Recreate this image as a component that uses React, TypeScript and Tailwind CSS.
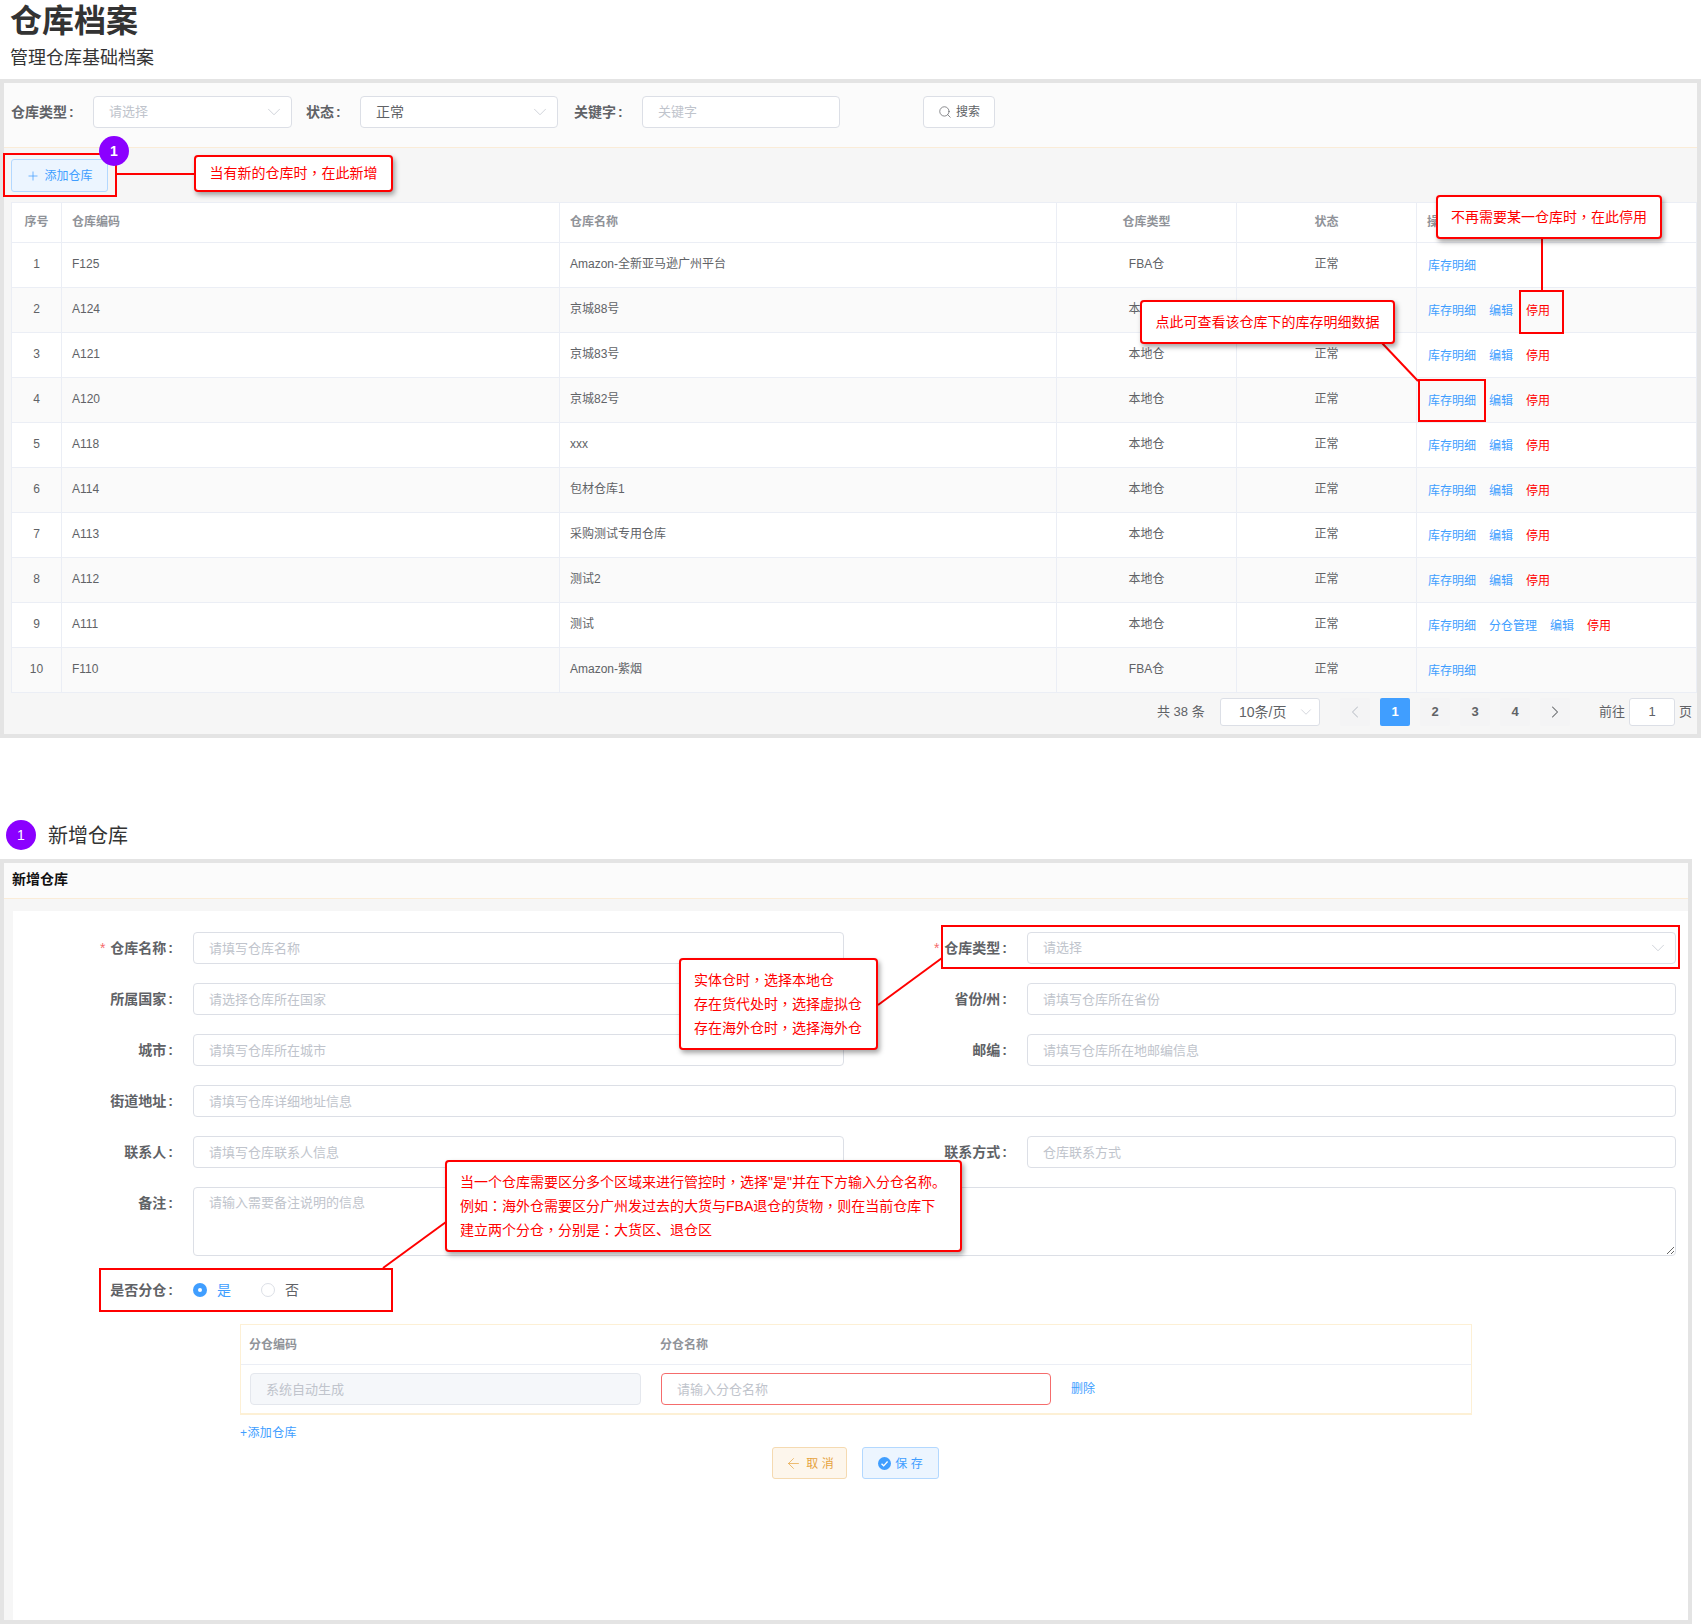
import React from 'react';
import { ChevronDown, ChevronLeft, ChevronRight, Plus, Search, ArrowLeft } from 'lucide-react';

type Row = { id: number; code: string; name: string; type: string; mode: 'view' | 'normal' | 'split' };

const rows: Row[] = [
  { id: 1, code: 'F125', name: 'Amazon-全新亚马逊广州平台', type: 'FBA仓', mode: 'view' },
  { id: 2, code: 'A124', name: '京城88号', type: '本地仓', mode: 'normal' },
  { id: 3, code: 'A121', name: '京城83号', type: '本地仓', mode: 'normal' },
  { id: 4, code: 'A120', name: '京城82号', type: '本地仓', mode: 'normal' },
  { id: 5, code: 'A118', name: 'xxx', type: '本地仓', mode: 'normal' },
  { id: 6, code: 'A114', name: '包材仓库1', type: '本地仓', mode: 'normal' },
  { id: 7, code: 'A113', name: '采购测试专用仓库', type: '本地仓', mode: 'normal' },
  { id: 8, code: 'A112', name: '测试2', type: '本地仓', mode: 'normal' },
  { id: 9, code: 'A111', name: '测试', type: '本地仓', mode: 'split' },
  { id: 10, code: 'F110', name: 'Amazon-紫烟', type: 'FBA仓', mode: 'view' },
];

const inputClass =
  'h-8 rounded-[4px] border px-[15px] text-[13px] text-[#606266] outline-none placeholder:text-[#c0c4cc]';

// the callouts centre their full-width punctuation, which the TC font does
function zh(text: string) {
  return text.split(/([，：])/).map((part, i) =>
    part === '，' || part === '：' ? (
      <span key={i} className="font-['Liberation_Sans','Noto_Sans_CJK_TC',sans-serif]">
        {part}
      </span>
    ) : (
      part
    ),
  );
}

function SelectBox({ value, placeholder, className }: { value?: string; placeholder?: string; className: string }) {
  return (
    <div className={`flex h-8 items-center justify-between rounded-[4px] border border-[#dcdfe6] bg-white pl-[15px] pr-[6px] text-[13px] ${className}`}>
      <span className={value ? 'text-[14px] text-[#606266]' : 'text-[#c0c4cc]'}>{value || placeholder}</span>
      <ChevronDown size={22} strokeWidth={0.8} className="text-[#c0c4cc]" />
    </div>
  );
}

function Colon() {
  return <span className="ml-[2px]">:</span>;
}

function FormLabel({ text, required, width }: { text: string; required?: boolean; width: string }) {
  return (
    <label className={`shrink-0 text-right text-[14px] font-bold text-[#606266] ${width}`}>
      {required && <span className="mr-[5px] font-normal text-[#f56c6c]">*</span>}
      {text}
      <Colon />
    </label>
  );
}

function Field({ label, placeholder, required }: { label: string; placeholder: string; required?: boolean }) {
  return (
    <div className="flex items-center">
      <FormLabel text={label} required={required} width="w-[160px]" />
      <input className={`${inputClass} ml-5 w-[651px] border-[#dcdfe6] bg-white`} placeholder={placeholder} />
    </div>
  );
}

function RightField({ label, placeholder }: { label: string; placeholder: string }) {
  return (
    <div className="flex items-center">
      <FormLabel text={label} width="w-[163px]" />
      <input className={`${inputClass} ml-5 w-[649px] border-[#dcdfe6] bg-white`} placeholder={placeholder} />
    </div>
  );
}

function Actions({ mode }: { mode: Row['mode'] }) {
  return (
    <div className="relative top-[2px] flex gap-[13px] text-[12px] text-[#409eff]">
      <span>库存明细</span>
      {mode === 'split' && <span>分仓管理</span>}
      {mode !== 'view' && <span>编辑</span>}
      {mode !== 'view' && <span className="text-[#ff0000]">停用</span>}
    </div>
  );
}

function StepBadge({ className }: { className?: string }) {
  return (
    <div className={`flex h-[30px] w-[30px] items-center justify-center rounded-full bg-[#8b00ff] text-[14px] text-white ${className || ''}`}>
      1
    </div>
  );
}

function Callout({ className, children }: { className: string; children: React.ReactNode }) {
  return (
    <div className={`absolute rounded-[4px] border-2 border-[#ff0000] bg-white text-[14px] text-[#ff0000] shadow-[2px_3px_5px_rgba(0,0,0,0.35)] ${className}`}>
      {children}
    </div>
  );
}

function Mark({ className }: { className: string }) {
  return <div className={`absolute border-2 border-[#ff0000] ${className}`} />;
}

function PageButton({ children, active }: { children: React.ReactNode; active?: boolean }) {
  return (
    <div className={`flex h-7 w-[30px] items-center justify-center rounded-[2px] text-[13px] font-bold ${active ? 'bg-[#409eff] text-white' : 'bg-[#f4f4f5] text-[#606266]'}`}>
      {children}
    </div>
  );
}

export default function App() {
  return (
    <div className="relative h-[1624px] w-[1701px] overflow-hidden bg-white font-['Liberation_Sans','Noto_Sans_CJK_SC',sans-serif]">
      {/* page title */}
      <div className="h-[79px] pl-[10px] pt-[1px]">
        <h1 className="text-[32px] font-bold leading-[40px] text-[#333333]">仓库档案</h1>
        <p className="mt-[3px] text-[18px] leading-[28px] text-[#333333]">管理仓库基础档案</p>
      </div>

      {/* list panel */}
      <div className="border-4 border-[#e4e4e4] bg-[#f6f6f6]">
        <div className="flex h-[65px] items-start border-b border-[#faecd8] bg-[#fbfbfb] pt-[13px] text-[14px] font-bold leading-8 text-[#606266]">
          <span className="ml-[7px] w-[82px]">
            仓库类型
            <Colon />
          </span>
          <SelectBox placeholder="请选择" className="w-[199px] font-normal" />
          <span className="ml-[14px] w-[54px]">
            状态
            <Colon />
          </span>
          <SelectBox value="正常" className="w-[198px] font-normal" />
          <span className="ml-[16px] w-[68px]">
            关键字
            <Colon />
          </span>
          <input className={`${inputClass} w-[198px] border-[#dcdfe6] bg-white font-normal`} placeholder="关键字" />
          <button className="ml-[83px] flex h-8 w-[72px] items-center justify-center gap-1 rounded-[4px] border border-[#dcdfe6] bg-white text-[12px] font-normal text-[#606266]">
            <Search size={14} strokeWidth={1.25} />
            搜索
          </button>
        </div>

        <div className="flex h-[54px] items-start pl-[7px] pt-[11px]">
          <button className="flex h-[33px] w-[97px] items-center justify-center gap-1 rounded-[3px] border border-[#b3d8ff] bg-[#ecf5ff] text-[12px] text-[#409eff]">
            <Plus size={14} strokeWidth={1.25} />
            添加仓库
          </button>
        </div>

        <div className="ml-[7px]">
          <table className="w-full table-fixed border-collapse bg-white text-[12px] text-[#606266]">
            <colgroup>
              <col className="w-[50px]" />
              <col className="w-[498px]" />
              <col className="w-[497px]" />
              <col className="w-[180px]" />
              <col className="w-[180px]" />
              <col />
            </colgroup>
            <thead>
              <tr className="h-10 text-left font-bold text-[#909399]">
                <th className="border border-[#ebeef5] pb-[2px] text-center">序号</th>
                <th className="border border-[#ebeef5] pb-[2px] pl-[10px]">仓库编码</th>
                <th className="border border-[#ebeef5] pb-[2px] pl-[10px]">仓库名称</th>
                <th className="border border-[#ebeef5] pb-[2px] text-center">仓库类型</th>
                <th className="border border-[#ebeef5] pb-[2px] text-center">状态</th>
                <th className="border border-[#ebeef5] pb-[2px] pl-[10px]">操作</th>
              </tr>
            </thead>
            <tbody>
              {rows.map((row) => (
                <tr key={row.id} className={`h-[45px] ${row.id % 2 === 0 ? 'bg-[#fafafa]' : 'bg-white'}`}>
                  <td className="border border-[#ebeef5] pb-[2px] text-center">{row.id}</td>
                  <td className="border border-[#ebeef5] pb-[2px] pl-[10px]">{row.code}</td>
                  <td className="border border-[#ebeef5] pb-[2px] pl-[10px]">{row.name}</td>
                  <td className="border border-[#ebeef5] pb-[2px] text-center">{row.type}</td>
                  <td className="border border-[#ebeef5] pb-[2px] text-center">正常</td>
                  <td className="border border-[#ebeef5] pb-[2px] pl-[11px]">
                    <Actions mode={row.mode} />
                  </td>
                </tr>
              ))}
            </tbody>
          </table>
        </div>

        {/* pagination */}
        <div className="flex h-[41px] items-start pl-[1153px] pt-[5px] text-[13px] leading-7 text-[#606266]">
          <span className="w-[63px]">共 38 条</span>
          <div className="flex h-7 w-[100px] items-center justify-between rounded-[3px] border border-[#dcdfe6] bg-white pl-[18px] pr-[4px] text-[14px]">
            <span>10条/页</span>
            <ChevronDown size={18} strokeWidth={0.9} className="text-[#c0c4cc]" />
          </div>
          <div className="ml-5 flex gap-[10px]">
            <PageButton>
              <ChevronLeft size={20} strokeWidth={1.25} className="text-[#c0c4cc]" />
            </PageButton>
            <PageButton active>1</PageButton>
            <PageButton>2</PageButton>
            <PageButton>3</PageButton>
            <PageButton>4</PageButton>
            <PageButton>
              <ChevronRight size={20} strokeWidth={1.25} />
            </PageButton>
          </div>
          <span className="ml-[29px]">前往</span>
          <div className="ml-[4px] flex h-7 w-[46px] items-center justify-center rounded-[3px] border border-[#dcdfe6] bg-white">1</div>
          <span className="ml-[4px]">页</span>
        </div>
      </div>

      {/* section heading */}
      <div className="mt-[82px] flex h-[39px] items-start pl-[6px]">
        <StepBadge />
        <span className="ml-[12px] mt-[1px] text-[20px] leading-[30px] text-[#333333]">新增仓库</span>
      </div>

      {/* add form panel */}
      <div className="h-[765px] w-[1692px] border-4 border-[#e4e4e4] bg-[#f6f6f6]">
        <div className="flex h-[36px] items-center border-b border-[#faecd8] bg-[#fbfbfb] pb-[2px] pl-[8px] text-[14px] font-bold text-[#111111]">
          新增仓库
        </div>
        <div className="ml-[9px] mt-[12px] h-[709px] bg-white pr-[12px] pt-[21px]">
          <div className="flex flex-col gap-[19px]">
            <div className="flex">
              <Field label="仓库名称" placeholder="请填写仓库名称" required />
              <div className="flex items-center">
                <FormLabel text="仓库类型" required width="w-[163px]" />
                <SelectBox placeholder="请选择" className="ml-5 w-[649px]" />
              </div>
            </div>
            <div className="flex">
              <Field label="所属国家" placeholder="请选择仓库所在国家" />
              <RightField label="省份/州" placeholder="请填写仓库所在省份" />
            </div>
            <div className="flex">
              <Field label="城市" placeholder="请填写仓库所在城市" />
              <RightField label="邮编" placeholder="请填写仓库所在地邮编信息" />
            </div>
            <div className="flex items-center">
              <FormLabel text="街道地址" width="w-[160px]" />
              <input className={`${inputClass} ml-5 flex-1 border-[#dcdfe6] bg-white`} placeholder="请填写仓库详细地址信息" />
            </div>
            <div className="flex">
              <Field label="联系人" placeholder="请填写仓库联系人信息" />
              <RightField label="联系方式" placeholder="仓库联系方式" />
            </div>
            <div className="flex items-start">
              <div className="flex h-8 items-center">
                <FormLabel text="备注" width="w-[160px]" />
              </div>
              <textarea
                className="ml-5 h-[69px] flex-1 resize-y rounded-[4px] border border-[#dcdfe6] bg-white px-[15px] py-[5px] text-[13px] outline-none placeholder:text-[#c0c4cc]"
                placeholder="请输入需要备注说明的信息"
              />
            </div>
            <div className="-mt-[1px] flex h-8 items-center text-[13px]">
              <FormLabel text="是否分仓" width="w-[160px]" />
              <span className="ml-5 flex h-[14px] w-[14px] items-center justify-center rounded-full bg-[#409eff]">
                <span className="h-1 w-1 rounded-full bg-white" />
              </span>
              <span className="ml-[10px] text-[14px] text-[#409eff]">是</span>
              <span className="ml-[30px] h-[14px] w-[14px] rounded-full border border-[#dcdfe6] bg-white" />
              <span className="ml-[10px] text-[14px] text-[#606266]">否</span>
            </div>
          </div>

          {/* sub warehouses */}
          <div className="ml-[227px] mt-[18px] h-[91px] w-[1232px] border border-b-2 border-[#fdf0d5]">
            <div className="flex h-[40px] items-center border-b border-[#ebeef5] pl-[8px] text-[12px] font-bold text-[#909399]">
              <span className="w-[411px]">分仓编码</span>
              <span>分仓名称</span>
            </div>
            <div className="flex h-[48px] items-center pl-[9px]">
              <input className={`${inputClass} w-[391px] border-[#e4e7ed] bg-[#f5f7fa]`} placeholder="系统自动生成" disabled />
              <input className={`${inputClass} ml-5 w-[390px] border-[#f56c6c] bg-white`} placeholder="请输入分仓名称" />
              <span className="ml-5 text-[12px] text-[#409eff]">删除</span>
            </div>
          </div>
          <div className="ml-[227px] mt-[9px] text-[12px] leading-[18px] tracking-[0.4px] text-[#409eff]">+添加仓库</div>
          <div className="ml-[759px] mt-[5px] flex gap-[15px]">
            <button className="flex h-8 w-[75px] items-center justify-center gap-1 rounded-[3px] border border-[#f5dab1] bg-[#fdf6ec] pt-[1px] text-[12px] text-[#e6a23c]">
              <ArrowLeft size={17} strokeWidth={1} />
              取 消
            </button>
            <button className="flex h-8 w-[77px] items-center justify-center gap-1 rounded-[3px] border border-[#b3d8ff] bg-[#ecf5ff] pt-[1px] text-[12px] text-[#409eff]">
              <svg width="13" height="13" viewBox="0 0 14 14">
                <circle cx="7" cy="7" r="7" fill="#409eff" />
                <path d="M3.8 7.2l2.3 2.3 4.2-4.6" fill="none" stroke="#fff" strokeWidth="1.4" />
              </svg>
              保 存
            </button>
          </div>
        </div>
      </div>

      {/* annotation layer */}
      <svg className="pointer-events-none absolute left-0 top-0" width="1701" height="1624">
        <g stroke="#ff0000" strokeWidth="2" fill="none">
          <path d="M116 174H195" />
          <path d="M1542 238V291" />
          <path d="M1382 343L1418 381" />
          <path d="M878 1005L942 958" />
          <path d="M446 1222L383 1268" />
        </g>
      </svg>

      <Mark className="left-[3px] top-[153px] h-[44px] w-[114px]" />
      <Mark className="left-[1519px] top-[290px] h-[44px] w-[45px]" />
      <Mark className="left-[1418px] top-[379px] h-[43px] w-[68px]" />
      <Mark className="left-[941px] top-[925px] h-[44px] w-[739px]" />
      <Mark className="left-[99px] top-[1268px] h-[44px] w-[294px]" />

      <StepBadge className="absolute left-[99px] top-[136px] font-bold" />

      <Callout className="left-[194px] top-[155px] flex h-[37px] w-[199px] items-center justify-center">
        {zh('当有新的仓库时，在此新增')}
      </Callout>
      <Callout className="left-[1436px] top-[195px] flex h-[44px] w-[226px] items-center justify-center">
        {zh('不再需要某一仓库时，在此停用')}
      </Callout>
      <Callout className="left-[1140px] top-[300px] flex h-[44px] w-[255px] items-center justify-center">
        {zh('点此可查看该仓库下的库存明细数据')}
      </Callout>
      <Callout className="left-[679px] top-[958px] flex h-[92px] w-[199px] items-center pl-[13px] leading-[24px]">
        <div>
          {zh('实体仓时，选择本地仓')}
          <br />
          {zh('存在货代处时，选择虚拟仓')}
          <br />
          {zh('存在海外仓时，选择海外仓')}
        </div>
      </Callout>
      <Callout className="left-[445px] top-[1160px] flex h-[92px] w-[517px] items-center pl-[13px] leading-[24px]">
        <div>
          {zh('当一个仓库需要区分多个区域来进行管控时，选择"是"并在下方输入分仓名称。')}
          <br />
          {zh('例如：海外仓需要区分广州发过去的大货与FBA退仓的货物，则在当前仓库下')}
          <br />
          {zh('建立两个分仓，分别是：大货区、退仓区')}
        </div>
      </Callout>
    </div>
  );
}
